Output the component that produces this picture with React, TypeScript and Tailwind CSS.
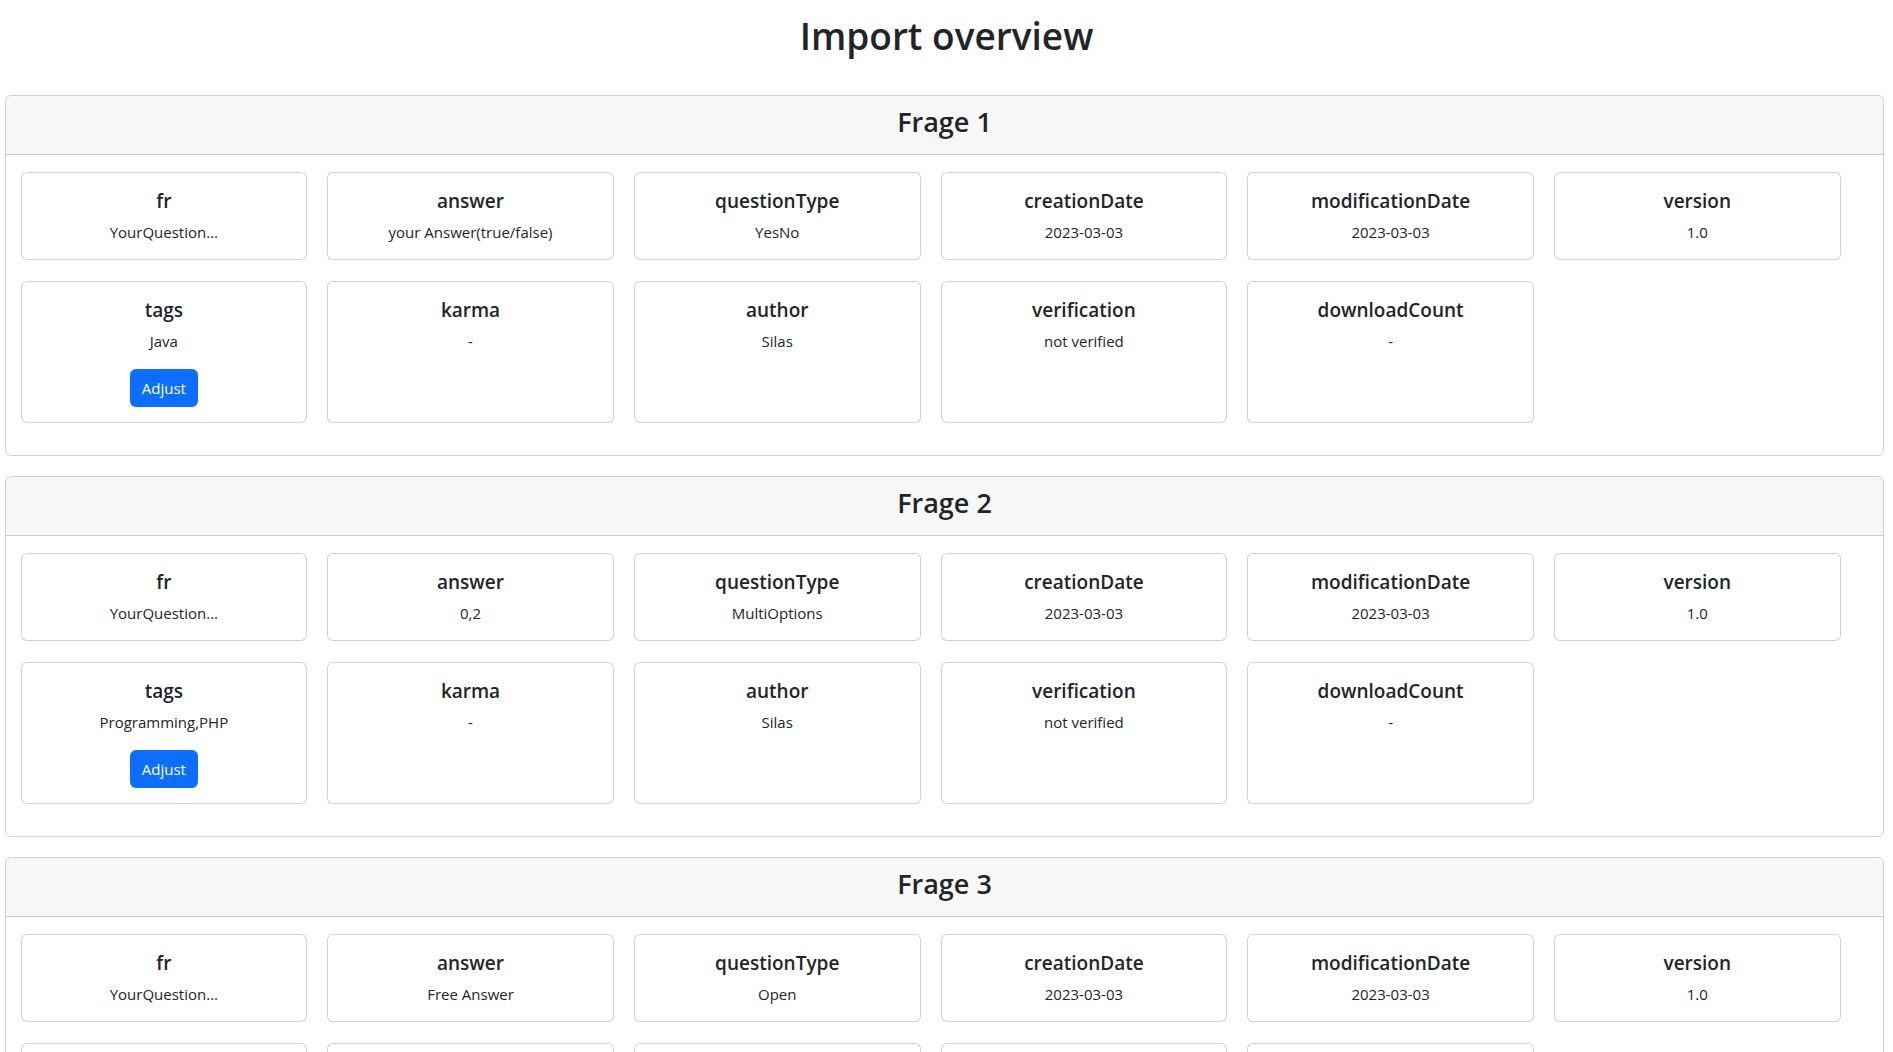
import React from 'react';

type Field = { label: string; value: string; adjust?: boolean };

interface Question {
  title: string;
  fields: Field[];
}

const questions: Question[] = [
  {
    title: 'Frage 1',
    fields: [
      { label: 'fr', value: 'YourQuestion...' },
      { label: 'answer', value: 'your Answer(true/false)' },
      { label: 'questionType', value: 'YesNo' },
      { label: 'creationDate', value: '2023-03-03' },
      { label: 'modificationDate', value: '2023-03-03' },
      { label: 'version', value: '1.0' },
      { label: 'tags', value: 'Java', adjust: true },
      { label: 'karma', value: '-' },
      { label: 'author', value: 'Silas' },
      { label: 'verification', value: 'not verified' },
      { label: 'downloadCount', value: '-' },
    ],
  },
  {
    title: 'Frage 2',
    fields: [
      { label: 'fr', value: 'YourQuestion...' },
      { label: 'answer', value: '0,2' },
      { label: 'questionType', value: 'MultiOptions' },
      { label: 'creationDate', value: '2023-03-03' },
      { label: 'modificationDate', value: '2023-03-03' },
      { label: 'version', value: '1.0' },
      { label: 'tags', value: 'Programming,PHP', adjust: true },
      { label: 'karma', value: '-' },
      { label: 'author', value: 'Silas' },
      { label: 'verification', value: 'not verified' },
      { label: 'downloadCount', value: '-' },
    ],
  },
  {
    title: 'Frage 3',
    fields: [
      { label: 'fr', value: 'YourQuestion...' },
      { label: 'answer', value: 'Free Answer' },
      { label: 'questionType', value: 'Open' },
      { label: 'creationDate', value: '2023-03-03' },
      { label: 'modificationDate', value: '2023-03-03' },
      { label: 'version', value: '1.0' },
      { label: 'tags', value: 'Java', adjust: true },
      { label: 'karma', value: '-' },
      { label: 'author', value: 'Silas' },
      { label: 'verification', value: 'not verified' },
      { label: 'downloadCount', value: '-' },
    ],
  },
];

function FieldCard({ field }: { field: Field }) {
  return (
    <div className="flex flex-col items-center border border-black/[.175] rounded-[6px] bg-white pt-[16px] pb-[15px] px-4 text-center">
      <h5 className="text-[19px] leading-[24px] font-semibold mb-[7px]">{field.label}</h5>
      <p className="text-[15px] leading-[24px]">{field.value}</p>
      {field.adjust && (
        <button className="mt-[16px] h-[38px] px-[12px] rounded-[6px] bg-[#0d6efd] text-white text-[15px] leading-[24px]">
          Adjust
        </button>
      )}
    </div>
  );
}

function QuestionCard({ q }: { q: Question }) {
  return (
    <div className="ml-[5px] w-[1879px] mb-[20.5px] border border-black/[.175] rounded-[6px]">
      <div className="h-[59px] pt-[8px] bg-black/[.03] border-b border-black/[.175] rounded-t-[5px] text-center">
        <h3 className="text-[27px] leading-[36px] font-semibold">{q.title}</h3>
      </div>
      <div className="pl-[14.5px] pt-[16.5px] pb-[31.5px]">
        <div className="grid grid-cols-[repeat(6,286.7px)] gap-x-[20px] gap-y-[21.5px]">
          {q.fields.map((f) => (
            <FieldCard key={f.label} field={f} />
          ))}
        </div>
      </div>
    </div>
  );
}

export default function App() {
  return (
    <div className="min-h-screen bg-white text-[#212529] font-['Open_Sans',sans-serif]">
      <h1 className="pt-[12px] mb-[35px] text-center text-[37px] leading-[48px] font-semibold">
        Import overview
      </h1>
      {questions.map((q) => (
        <QuestionCard key={q.title} q={q} />
      ))}
    </div>
  );
}
